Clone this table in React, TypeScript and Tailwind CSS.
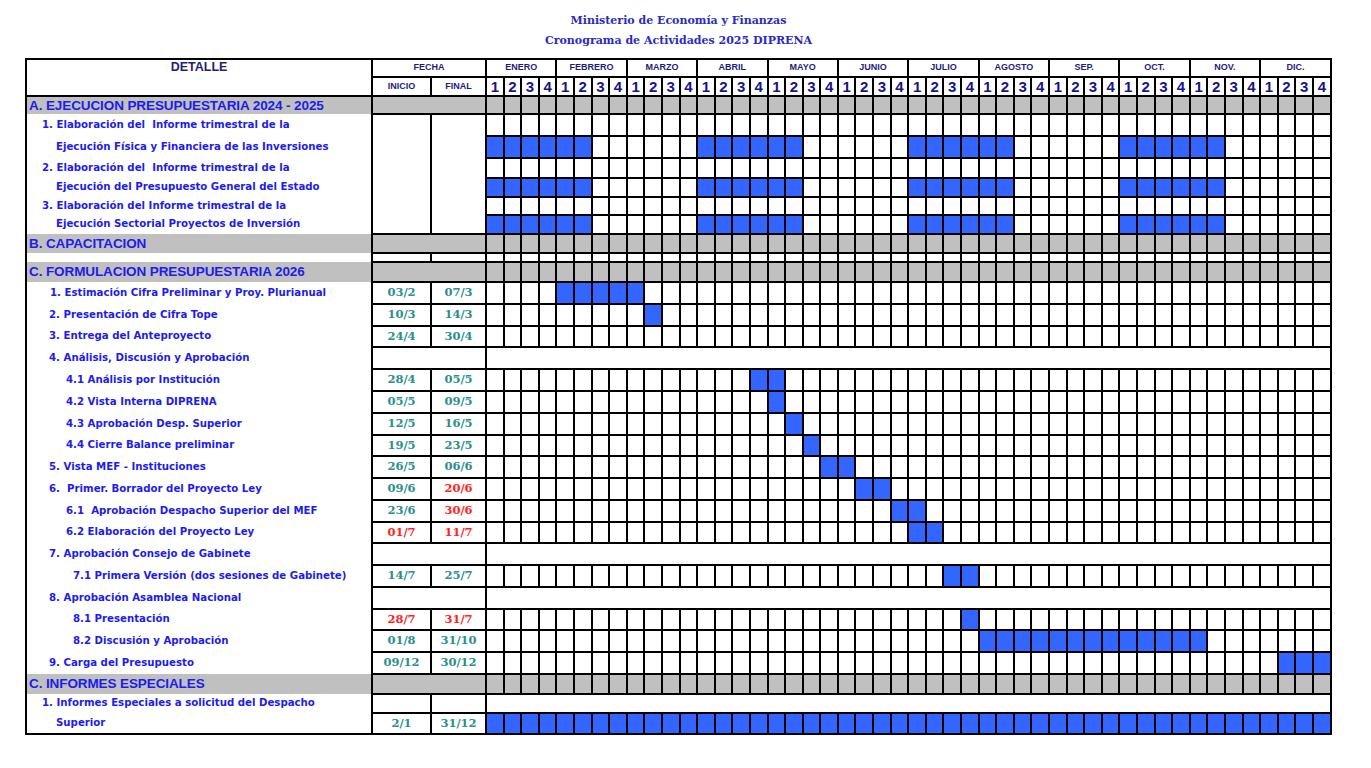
import React from 'react';

const MONTHS = ['ENERO', 'FEBRERO', 'MARZO', 'ABRIL', 'MAYO', 'JUNIO', 'JULIO', 'AGOSTO', 'SEP.', 'OCT.', 'NOV.', 'DIC.'];
const WEEKS = Array.from({ length: 48 }, (_, i) => i);
const range = (a: number, b: number) => Array.from({ length: b - a + 1 }, (_, i) => a + i);
// informes trimestrales: ene-feb, abr-may, jul-ago, oct-nov
const QUARTERLY = [...range(0, 5), ...range(12, 17), ...range(24, 29), ...range(36, 41)];

type Fecha = 'split' | 'merged' | 'tall' | 'none';

type Row =
  | { kind: 'section'; label: string; h: string }
  | { kind: 'spacer'; h: string }
  | {
      kind: 'task';
      label: string;
      indent: string;
      h: string;
      fecha: Fecha;
      ini?: string;
      fin?: string;
      iniRed?: boolean;
      finRed?: boolean;
      bars?: number[];
      grid: boolean;
    };

const ROWS: Row[] = [
  { kind: 'section', label: 'A. EJECUCION PRESUPUESTARIA 2024 - 2025', h: 'h-[18px]' },
  { kind: 'task', label: '1. Elaboración del  Informe trimestral de la', indent: 'pl-[15px]', h: 'h-[22px]', fecha: 'tall', grid: true },
  { kind: 'task', label: 'Ejecución Física y Financiera de las Inversiones', indent: 'pl-[29px]', h: 'h-[22px]', fecha: 'none', grid: true, bars: QUARTERLY },
  { kind: 'task', label: '2. Elaboración del  Informe trimestral de la', indent: 'pl-[15px]', h: 'h-[20px]', fecha: 'none', grid: true },
  { kind: 'task', label: 'Ejecución del Presupuesto General del Estado', indent: 'pl-[29px]', h: 'h-[19px]', fecha: 'none', grid: true, bars: QUARTERLY },
  { kind: 'task', label: '3. Elaboración del Informe trimestral de la', indent: 'pl-[15px]', h: 'h-[18px]', fecha: 'none', grid: true },
  { kind: 'task', label: 'Ejecución Sectorial Proyectos de Inversión', indent: 'pl-[29px]', h: 'h-[19px]', fecha: 'none', grid: true, bars: QUARTERLY },
  { kind: 'section', label: 'B. CAPACITACION', h: 'h-[19px]' },
  { kind: 'spacer', h: 'h-[9px]' },
  { kind: 'section', label: 'C. FORMULACION PRESUPUESTARIA 2026', h: 'h-[20px]' },
  { kind: 'task', label: '1. Estimación Cifra Preliminar y Proy. Plurianual', indent: 'pl-[23px]', h: 'h-[22px]', fecha: 'split', ini: '03/2', fin: '07/3', grid: true, bars: range(4, 8) },
  { kind: 'task', label: '2. Presentación de Cifra Tope', indent: 'pl-[22px]', h: 'h-[22px]', fecha: 'split', ini: '10/3', fin: '14/3', grid: true, bars: [9] },
  { kind: 'task', label: '3. Entrega del Anteproyecto', indent: 'pl-[22px]', h: 'h-[21px]', fecha: 'split', ini: '24/4', fin: '30/4', grid: true },
  { kind: 'task', label: '4. Análisis, Discusión y Aprobación', indent: 'pl-[22px]', h: 'h-[22px]', fecha: 'merged', grid: false },
  { kind: 'task', label: '4.1 Análisis por Institución', indent: 'pl-[39px]', h: 'h-[22px]', fecha: 'split', ini: '28/4', fin: '05/5', grid: true, bars: [15, 16] },
  { kind: 'task', label: '4.2 Vista Interna DIPRENA', indent: 'pl-[39px]', h: 'h-[22px]', fecha: 'split', ini: '05/5', fin: '09/5', grid: true, bars: [16] },
  { kind: 'task', label: '4.3 Aprobación Desp. Superior', indent: 'pl-[39px]', h: 'h-[22px]', fecha: 'split', ini: '12/5', fin: '16/5', grid: true, bars: [17] },
  { kind: 'task', label: '4.4 Cierre Balance preliminar', indent: 'pl-[39px]', h: 'h-[21px]', fecha: 'split', ini: '19/5', fin: '23/5', grid: true, bars: [18] },
  { kind: 'task', label: '5. Vista MEF - Instituciones', indent: 'pl-[22px]', h: 'h-[22px]', fecha: 'split', ini: '26/5', fin: '06/6', grid: true, bars: [19, 20] },
  { kind: 'task', label: '6.  Primer. Borrador del Proyecto Ley', indent: 'pl-[22px]', h: 'h-[22px]', fecha: 'split', ini: '09/6', fin: '20/6', finRed: true, grid: true, bars: [21, 22] },
  { kind: 'task', label: '6.1  Aprobación Despacho Superior del MEF', indent: 'pl-[39px]', h: 'h-[22px]', fecha: 'split', ini: '23/6', fin: '30/6', finRed: true, grid: true, bars: [23, 24] },
  { kind: 'task', label: '6.2 Elaboración del Proyecto Ley', indent: 'pl-[39px]', h: 'h-[21px]', fecha: 'split', ini: '01/7', fin: '11/7', iniRed: true, finRed: true, grid: true, bars: [24, 25] },
  { kind: 'task', label: '7. Aprobación Consejo de Gabinete', indent: 'pl-[22px]', h: 'h-[22px]', fecha: 'merged', grid: false },
  { kind: 'task', label: '7.1 Primera Versión (dos sesiones de Gabinete)', indent: 'pl-[46px]', h: 'h-[22px]', fecha: 'split', ini: '14/7', fin: '25/7', grid: true, bars: [26, 27] },
  { kind: 'task', label: '8. Aprobación Asamblea Nacional', indent: 'pl-[22px]', h: 'h-[22px]', fecha: 'merged', grid: false },
  { kind: 'task', label: '8.1 Presentación', indent: 'pl-[46px]', h: 'h-[21px]', fecha: 'split', ini: '28/7', fin: '31/7', iniRed: true, finRed: true, grid: true, bars: [27] },
  { kind: 'task', label: '8.2 Discusión y Aprobación', indent: 'pl-[46px]', h: 'h-[22px]', fecha: 'split', ini: '01/8', fin: '31/10', grid: true, bars: range(28, 40) },
  { kind: 'task', label: '9. Carga del Presupuesto', indent: 'pl-[22px]', h: 'h-[22px]', fecha: 'split', ini: '09/12', fin: '30/12', grid: true, bars: [45, 46, 47] },
  { kind: 'section', label: 'C. INFORMES ESPECIALES', h: 'h-[20px]' },
  { kind: 'task', label: '1. Informes Especiales a solicitud del Despacho', indent: 'pl-[15px]', h: 'h-[19px]', fecha: 'split', grid: false },
  { kind: 'task', label: 'Superior', indent: 'pl-[29px]', h: 'h-[21px]', fecha: 'split', ini: '2/1', fin: '31/12', grid: true, bars: WEEKS },
];

const cell = 'border-2 border-black p-0';
const itemText = "text-[10.2px] font-bold text-[#1c1cf0] [font-family:'DejaVu_Sans',sans-serif]";
const dateText = "text-center text-[11.5px] font-bold leading-none [font-family:'DejaVu_Serif',serif]";

function DateCell({ value, red }: { value?: string; red?: boolean }) {
  return <td className={`${cell} ${dateText} ${red ? 'text-[#ff2424]' : 'text-[#2b8f8a]'}`}>{value}</td>;
}

function WeekCells({ bg, bars }: { bg: string; bars?: number[] }) {
  return (
    <>
      {WEEKS.map((w) => (
        <td key={w} className={`${cell} ${bars?.includes(w) ? 'bg-[#3366ff]' : bg}`} />
      ))}
    </>
  );
}

function BodyRow({ row, last }: { row: Row; last: boolean }) {
  const detail = `border-l-2 border-r-2 border-black p-0 whitespace-pre leading-none ${last ? 'border-b-2' : ''}`;

  if (row.kind === 'section') {
    return (
      <tr className={row.h}>
        <td className={`${detail} bg-[#c0c0c0] pl-[2px] text-[13.5px] font-bold tracking-[-0.1px] text-[#1c1cf0]`}>{row.label}</td>
        <td colSpan={2} className={`${cell} bg-[#c0c0c0]`} />
        <WeekCells bg="bg-[#c0c0c0]" />
      </tr>
    );
  }

  if (row.kind === 'spacer') {
    return (
      <tr className={row.h}>
        <td className={detail} />
        <td className={cell} />
        <td className={cell} />
        <WeekCells bg="bg-white" />
      </tr>
    );
  }

  return (
    <tr className={row.h}>
      <td className={`${detail} ${row.indent} ${itemText}`}>{row.label}</td>
      {row.fecha === 'split' && (
        <>
          <DateCell value={row.ini} red={row.iniRed} />
          <DateCell value={row.fin} red={row.finRed} />
        </>
      )}
      {row.fecha === 'merged' && <td colSpan={2} className={cell} />}
      {row.fecha === 'tall' && (
        <>
          <td rowSpan={6} className={cell} />
          <td rowSpan={6} className={cell} />
        </>
      )}
      {row.grid ? <WeekCells bg="bg-white" bars={row.bars} /> : <td colSpan={48} className={cell} />}
    </tr>
  );
}

export default function App() {
  return (
    <div className="min-h-screen bg-white pl-[25px] pt-[11px] [font-family:'Liberation_Sans',Arial,sans-serif]">
      <div className="w-[1307px] text-center text-[11px] font-bold leading-[20px] text-[#2a2ac4] [font-family:'DejaVu_Serif',serif]">
        <div>Ministerio de Economía y Finanzas</div>
        <div>Cronograma de Actividades 2025 DIPRENA</div>
      </div>

      <table className="mt-[7px] w-[1307px] table-fixed border-collapse">
        <colgroup>
          <col className="w-[346px]" />
          <col className="w-[59px]" />
          <col className="w-[55px]" />
          {WEEKS.map((w) => (
            <col key={w} />
          ))}
        </colgroup>
        <thead>
          <tr className="h-[18px]">
            <td rowSpan={2} className={`${cell} pt-[1px] text-center align-top text-[12.5px] font-bold leading-none text-[#1d1d7c]`}>
              DETALLE
            </td>
            <td colSpan={2} className={`${cell} text-center text-[9px] font-bold text-[#1d1d7c]`}>
              FECHA
            </td>
            {MONTHS.map((m) => (
              <td key={m} colSpan={4} className={`${cell} text-center text-[9px] font-bold text-[#1d1d7c]`}>
                {m}
              </td>
            ))}
          </tr>
          <tr className="h-[19px]">
            <td className={`${cell} text-center text-[9px] font-bold text-[#1d1d7c]`}>INICIO</td>
            <td className={`${cell} text-center text-[9px] font-bold text-[#1d1d7c]`}>FINAL</td>
            {WEEKS.map((w) => (
              <td key={w} className={`${cell} text-center text-[15px] font-bold leading-none text-[#15158a]`}>
                {(w % 4) + 1}
              </td>
            ))}
          </tr>
        </thead>
        <tbody>
          {ROWS.map((row, i) => (
            <BodyRow key={i} row={row} last={i === ROWS.length - 1} />
          ))}
        </tbody>
      </table>
    </div>
  );
}
